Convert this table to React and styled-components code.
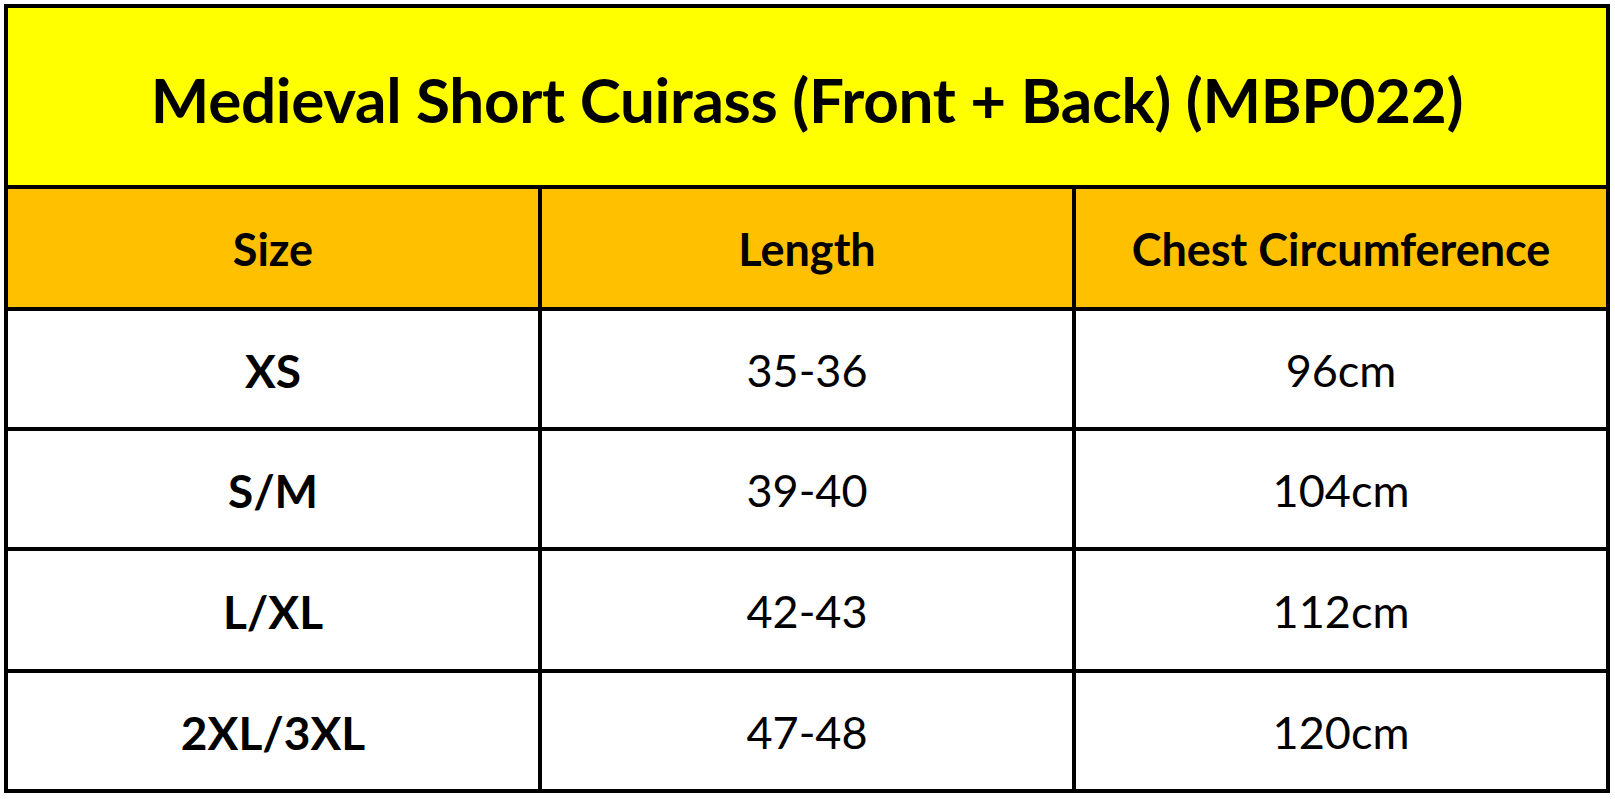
import React from 'react'
import styled, { createGlobalStyle } from 'styled-components'

const GlobalStyle = createGlobalStyle`
  html, body {
    margin: 0;
    padding: 0;
    background: #ffffff;
  }
  body {
    font-family: Lato, "Open Sans", "Liberation Sans", sans-serif;
    color: #000;
  }
`

const rows = [
  { size: 'XS', length: '35-36', chest: '96cm' },
  { size: 'S/M', length: '39-40', chest: '104cm' },
  { size: 'L/XL', length: '42-43', chest: '112cm' },
  { size: '2XL/3XL', length: '47-48', chest: '120cm' },
]

const Page = styled.div`
  width: 1615px;
  height: 799px;
  padding: 4px;
  box-sizing: border-box;
  background: #fff;
`

const Table = styled.div`
  width: 1606px;
  display: grid;
  grid-template-columns: 530px 530px 530px;
  grid-template-rows: 177px 118px 116px 116px 118px 116px;
  gap: 4px;
  background: #000;
  border: 4px solid #000;
  box-sizing: border-box;
`

const Title = styled.div`
  grid-column: 1 / span 3;
  background: #ffff00;
  display: flex;
  align-items: center;
  justify-content: center;
  font-weight: 700;
  font-size: 62px;
  letter-spacing: -0.3px;
  padding-top: 4px;
`

const Cell = styled.div`
  display: flex;
  align-items: center;
  justify-content: center;
  background: ${({ head }) => (head ? '#ffc000' : '#ffffff')};
  font-weight: ${({ bold }) => (bold ? 700 : 400)};
  font-size: ${({ head, bold }) => (bold && !head ? '46px' : '45px')};
  padding-top: 2px;
`

export default function App() {
  return (
    <>
      <GlobalStyle />
      <Page>
        <Table>
          <Title>Medieval Short Cuirass (Front + Back) (MBP022)</Title>
          <Cell head bold>Size</Cell>
          <Cell head bold>Length</Cell>
          <Cell head bold>Chest Circumference</Cell>
          {rows.map((r) => (
            <React.Fragment key={r.size}>
              <Cell bold>{r.size}</Cell>
              <Cell>{r.length}</Cell>
              <Cell>{r.chest}</Cell>
            </React.Fragment>
          ))}
        </Table>
      </Page>
    </>
  )
}
